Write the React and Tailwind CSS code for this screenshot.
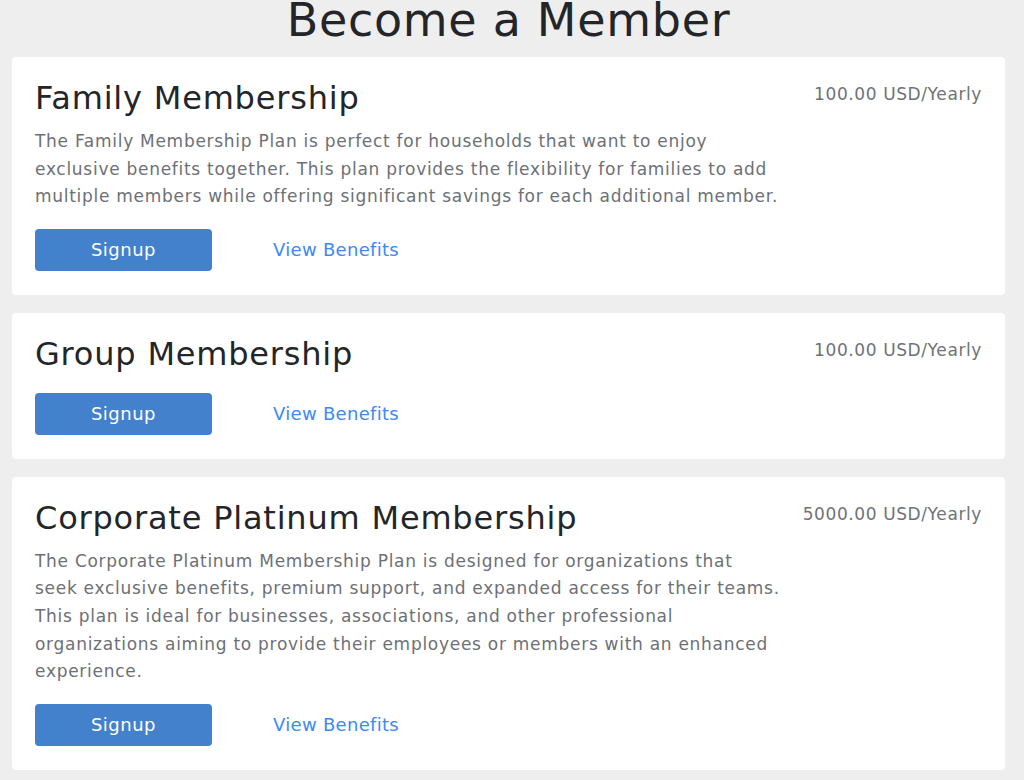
import React from "react";

const plans = [
  {
    title: "Family Membership",
    price: "100.00 USD/Yearly",
    lines: [
      "The Family Membership Plan is perfect for households that want to enjoy",
      "exclusive benefits together. This plan provides the flexibility for families to add",
      "multiple members while offering significant savings for each additional member.",
    ],
  },
  {
    title: "Group Membership",
    price: "100.00 USD/Yearly",
    lines: [],
  },
  {
    title: "Corporate Platinum Membership",
    price: "5000.00 USD/Yearly",
    lines: [
      "The Corporate Platinum Membership Plan is designed for organizations that",
      "seek exclusive benefits, premium support, and expanded access for their teams.",
      "This plan is ideal for businesses, associations, and other professional",
      "organizations aiming to provide their employees or members with an enhanced",
      "experience.",
    ],
  },
];

function Card({ plan }) {
  const hasDesc = plan.lines.length > 0;
  return (
    <div className="bg-white rounded-[4px] pt-[21px] pb-[24px] pl-[23px] pr-[23px]">
      <div className="flex justify-between items-start">
        <div className="min-w-0">
          <h2 className="text-[32px] leading-[40px] tracking-[0.8px] text-[#232529] font-normal whitespace-nowrap">
            {plan.title}
          </h2>
          {hasDesc && (
            <div className="mt-[10px] text-[17px] leading-[27.6px] tracking-[0.72px] text-[#6d7076]">
              {plan.lines.map((l, i) => (
                <div key={i} className="whitespace-nowrap">{l}</div>
              ))}
            </div>
          )}
        </div>
        <div className="mt-[4px] text-[17px] leading-[24px] tracking-[0.6px] text-[#6f7278] whitespace-nowrap">
          {plan.price}
        </div>
      </div>
      <div className={`flex items-center gap-[61px] ${hasDesc ? "mt-[18px]" : "mt-[19px]"}`}>
        <button className="w-[177px] h-[42px] rounded-[4px] bg-[#4381cc] text-white text-[18px] tracking-[0.5px] leading-none">
          Signup
        </button>
        <a className="text-[18px] tracking-[0.3px] text-[#3b8af5] leading-none cursor-pointer">View Benefits</a>
      </div>
    </div>
  );
}

export default function App() {
  return (
    <div
      className="min-h-[780px] bg-[#eeeeee] pl-3 pr-[19px] pb-4"
      style={{ fontFamily: '"DejaVu Sans", "Open Sans", sans-serif' }}
    >
      <h1 className="text-center text-[46px] leading-[40px] tracking-[0.7px] text-[#232529] font-normal mb-[17px]">
        Become a Member
      </h1>
      <div className="flex flex-col gap-[18px]">
        {plans.map((p) => (
          <Card key={p.title} plan={p} />
        ))}
      </div>
    </div>
  );
}
